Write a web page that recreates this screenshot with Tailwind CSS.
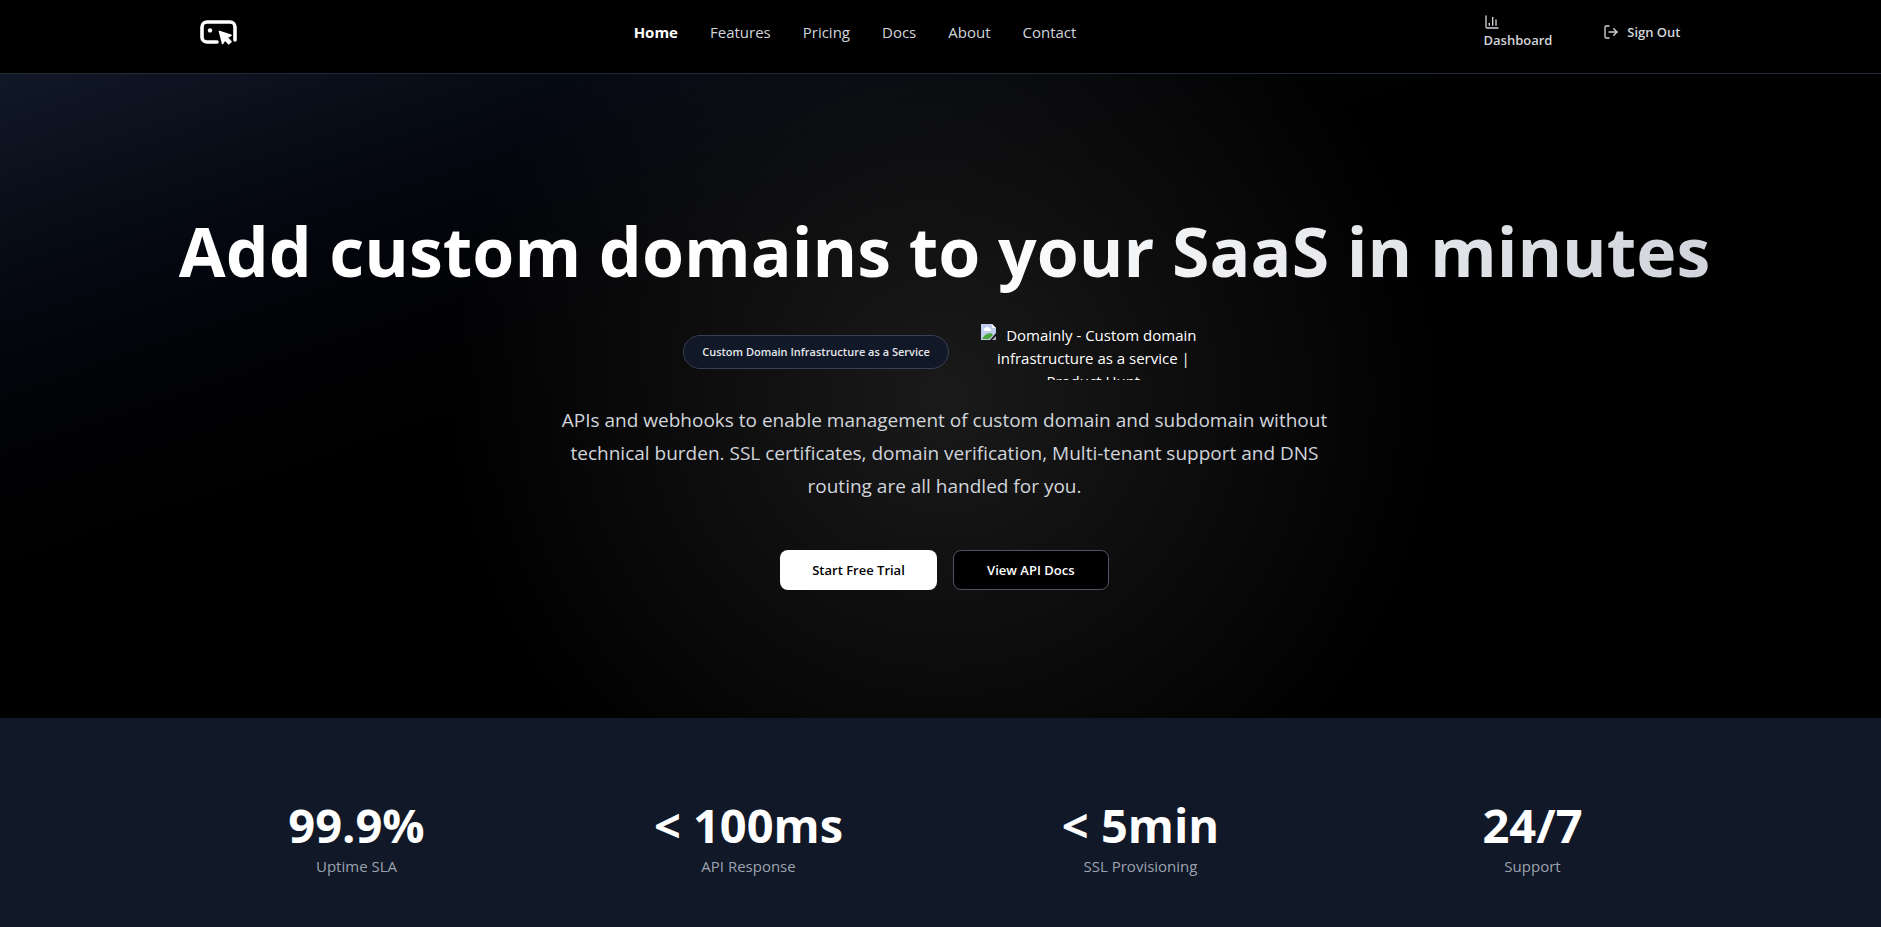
<!DOCTYPE html>
<html lang="en">
<head>
    <meta charset="UTF-8">
    <meta name="viewport" content="width=device-width, initial-scale=1.0">
    <title>Domainly - Custom domain infrastructure as a service</title>
    <script src="https://cdn.jsdelivr.net/npm/@tailwindcss/browser@4"></script>
</head>
<body class="min-h-screen overflow-x-hidden bg-black font-['Open_Sans','Noto_Sans',sans-serif] text-[15px] leading-6 text-white">
    <div class="-mr-2 flex min-h-screen flex-col">
        <!-- Header -->
        <header class="border-b border-[#1f2937] bg-black pb-[9px]">
            <div class="mx-auto flex h-16 max-w-[1536px] items-center justify-between pr-6 pl-[22px]">
                <a href="#" aria-label="Domainly">
                    <svg class="size-10" viewBox="0 0 40 40" fill="none">
                        <path d="M18 30H8a5 5 0 0 1-5-5V15a5 5 0 0 1 5-5h23a5 5 0 0 1 5 5v13" stroke="#fff" stroke-width="3.6" stroke-linecap="round"/>
                        <circle cx="11" cy="18.4" r="2.2" fill="#fff"/>
                        <path d="M20.500 19.500l11.500 3.800-4 2.300 4 4-2.200 2.200-4-4-2.200 3.700z" fill="#fff" stroke="#000" stroke-width="3" stroke-linejoin="round"/>
                        <path d="M20.500 19.500l11.500 3.800-4 2.300 4 4-2.200 2.200-4-4-2.200 3.700z" fill="#fff" stroke="#fff" stroke-width="1.6" stroke-linejoin="round"/>
                    </svg>
                </a>
                <nav class="flex gap-8 text-[#d1d5db]">
                    <a href="#" class="font-bold text-white">Home</a>
                    <a href="#">Features</a>
                    <a href="#">Pricing</a>
                    <a href="#">Docs</a>
                    <a href="#">About</a>
                    <a href="#">Contact</a>
                </nav>
                <div class="flex w-[217px] items-center justify-between pr-2 pl-3 text-[13px] leading-5 font-semibold text-[#d1d5db]">
                    <a href="#">
                        <svg class="size-4" viewBox="0 0 24 24" fill="none" stroke="currentColor" stroke-width="2" stroke-linecap="round" stroke-linejoin="round"><path d="M3 3v16a2 2 0 0 0 2 2h16"/><path d="M18 17V9"/><path d="M13 17V5"/><path d="M8 17v-3"/></svg>
                        Dashboard
                    </a>
                    <button type="button" class="flex items-center gap-2">
                        <svg class="size-4" viewBox="0 0 24 24" fill="none" stroke="currentColor" stroke-width="2" stroke-linecap="round" stroke-linejoin="round"><path d="M9 21H5a2 2 0 0 1-2-2V5a2 2 0 0 1 2-2h4"/><path d="m16 17 5-5-5-5"/><path d="M21 12H9"/></svg>
                        Sign Out
                    </button>
                </div>
            </div>
        </header>

        <!-- Hero -->
        <section class="bg-[radial-gradient(circle_at_center,rgba(255,255,255,0.1),transparent_50%),linear-gradient(to_bottom_right_in_oklab,#111827,#000_50%)] py-32">
            <div class="mx-auto flex max-w-[1536px] flex-col items-center text-center">
                <h1 class="mb-6 bg-[linear-gradient(to_right_in_oklab,#fff,#fff_50%,#d1d5db)] bg-clip-text text-[68px] leading-[98px] font-bold whitespace-nowrap text-transparent">Add custom domains to your SaaS in minutes</h1>
                <div class="mb-6 flex items-center justify-center gap-8">
                    <span class="rounded-full border border-[#374151] bg-[#111827] px-[18px] py-2 text-[11px] leading-4 font-semibold text-[#e5e7eb]">Custom Domain Infrastructure as a Service</span>
                    <a href="#" class="block h-14 w-[225px] overflow-hidden leading-[23px]">
                        <svg class="float-left size-4" viewBox="0 0 16 16">
                            <path d="M0 0h11l4 4v5l-6 7H0z" fill="#c0cdec"/>
                            <path d="M3 7a2 2 0 0 1 1-3 3 3 0 0 1 5 1 1 1 0 0 1 0 2z" fill="#fff"/>
                            <path d="M1 15c2-4 5-6 9-6l2 2-4 4z" fill="#4ea63f"/>
                            <path d="M11 0v4h4z" fill="#f3f4f6"/>
                            <path d="M15 12v4h-4z" fill="#a9b0bd"/>
                        </svg>
                        Domainly - Custom domain infrastructure as a service | Product Hunt
                    </a>
                </div>
                <p class="mb-[47px] max-w-[784px] text-[19px] leading-[33px] text-[#d1d5db]">APIs and webhooks to enable management of custom domain and subdomain without technical burden. SSL certificates, domain verification, Multi-tenant support and DNS routing are all handled for you.</p>
                <div class="flex gap-4 text-[13px] leading-5 font-semibold">
                    <button type="button" class="h-10 min-w-[156px] rounded-lg bg-white px-8 text-black">Start Free Trial</button>
                    <button type="button" class="h-10 min-w-[156px] rounded-lg border border-[#4b5563] bg-black px-8 text-white">View API Docs</button>
                </div>
            </div>
        </section>

        <!-- Stats -->
        <section class="flex-1 bg-[#111827] pt-20 pb-12">
            <div class="mx-auto grid max-w-[1536px] grid-cols-4 gap-8 text-center">
                <div>
                    <div class="mb-0.5 text-[47px] leading-[54px] font-bold">99.9%</div>
                    <div class="text-[#9ca3af]">Uptime SLA</div>
                </div>
                <div>
                    <div class="mb-0.5 text-[47px] leading-[54px] font-bold">&lt; 100ms</div>
                    <div class="text-[#9ca3af]">API Response</div>
                </div>
                <div>
                    <div class="mb-0.5 text-[47px] leading-[54px] font-bold">&lt; 5min</div>
                    <div class="text-[#9ca3af]">SSL Provisioning</div>
                </div>
                <div>
                    <div class="mb-0.5 text-[47px] leading-[54px] font-bold">24/7</div>
                    <div class="text-[#9ca3af]">Support</div>
                </div>
            </div>
        </section>
    </div>
</body>
</html>
